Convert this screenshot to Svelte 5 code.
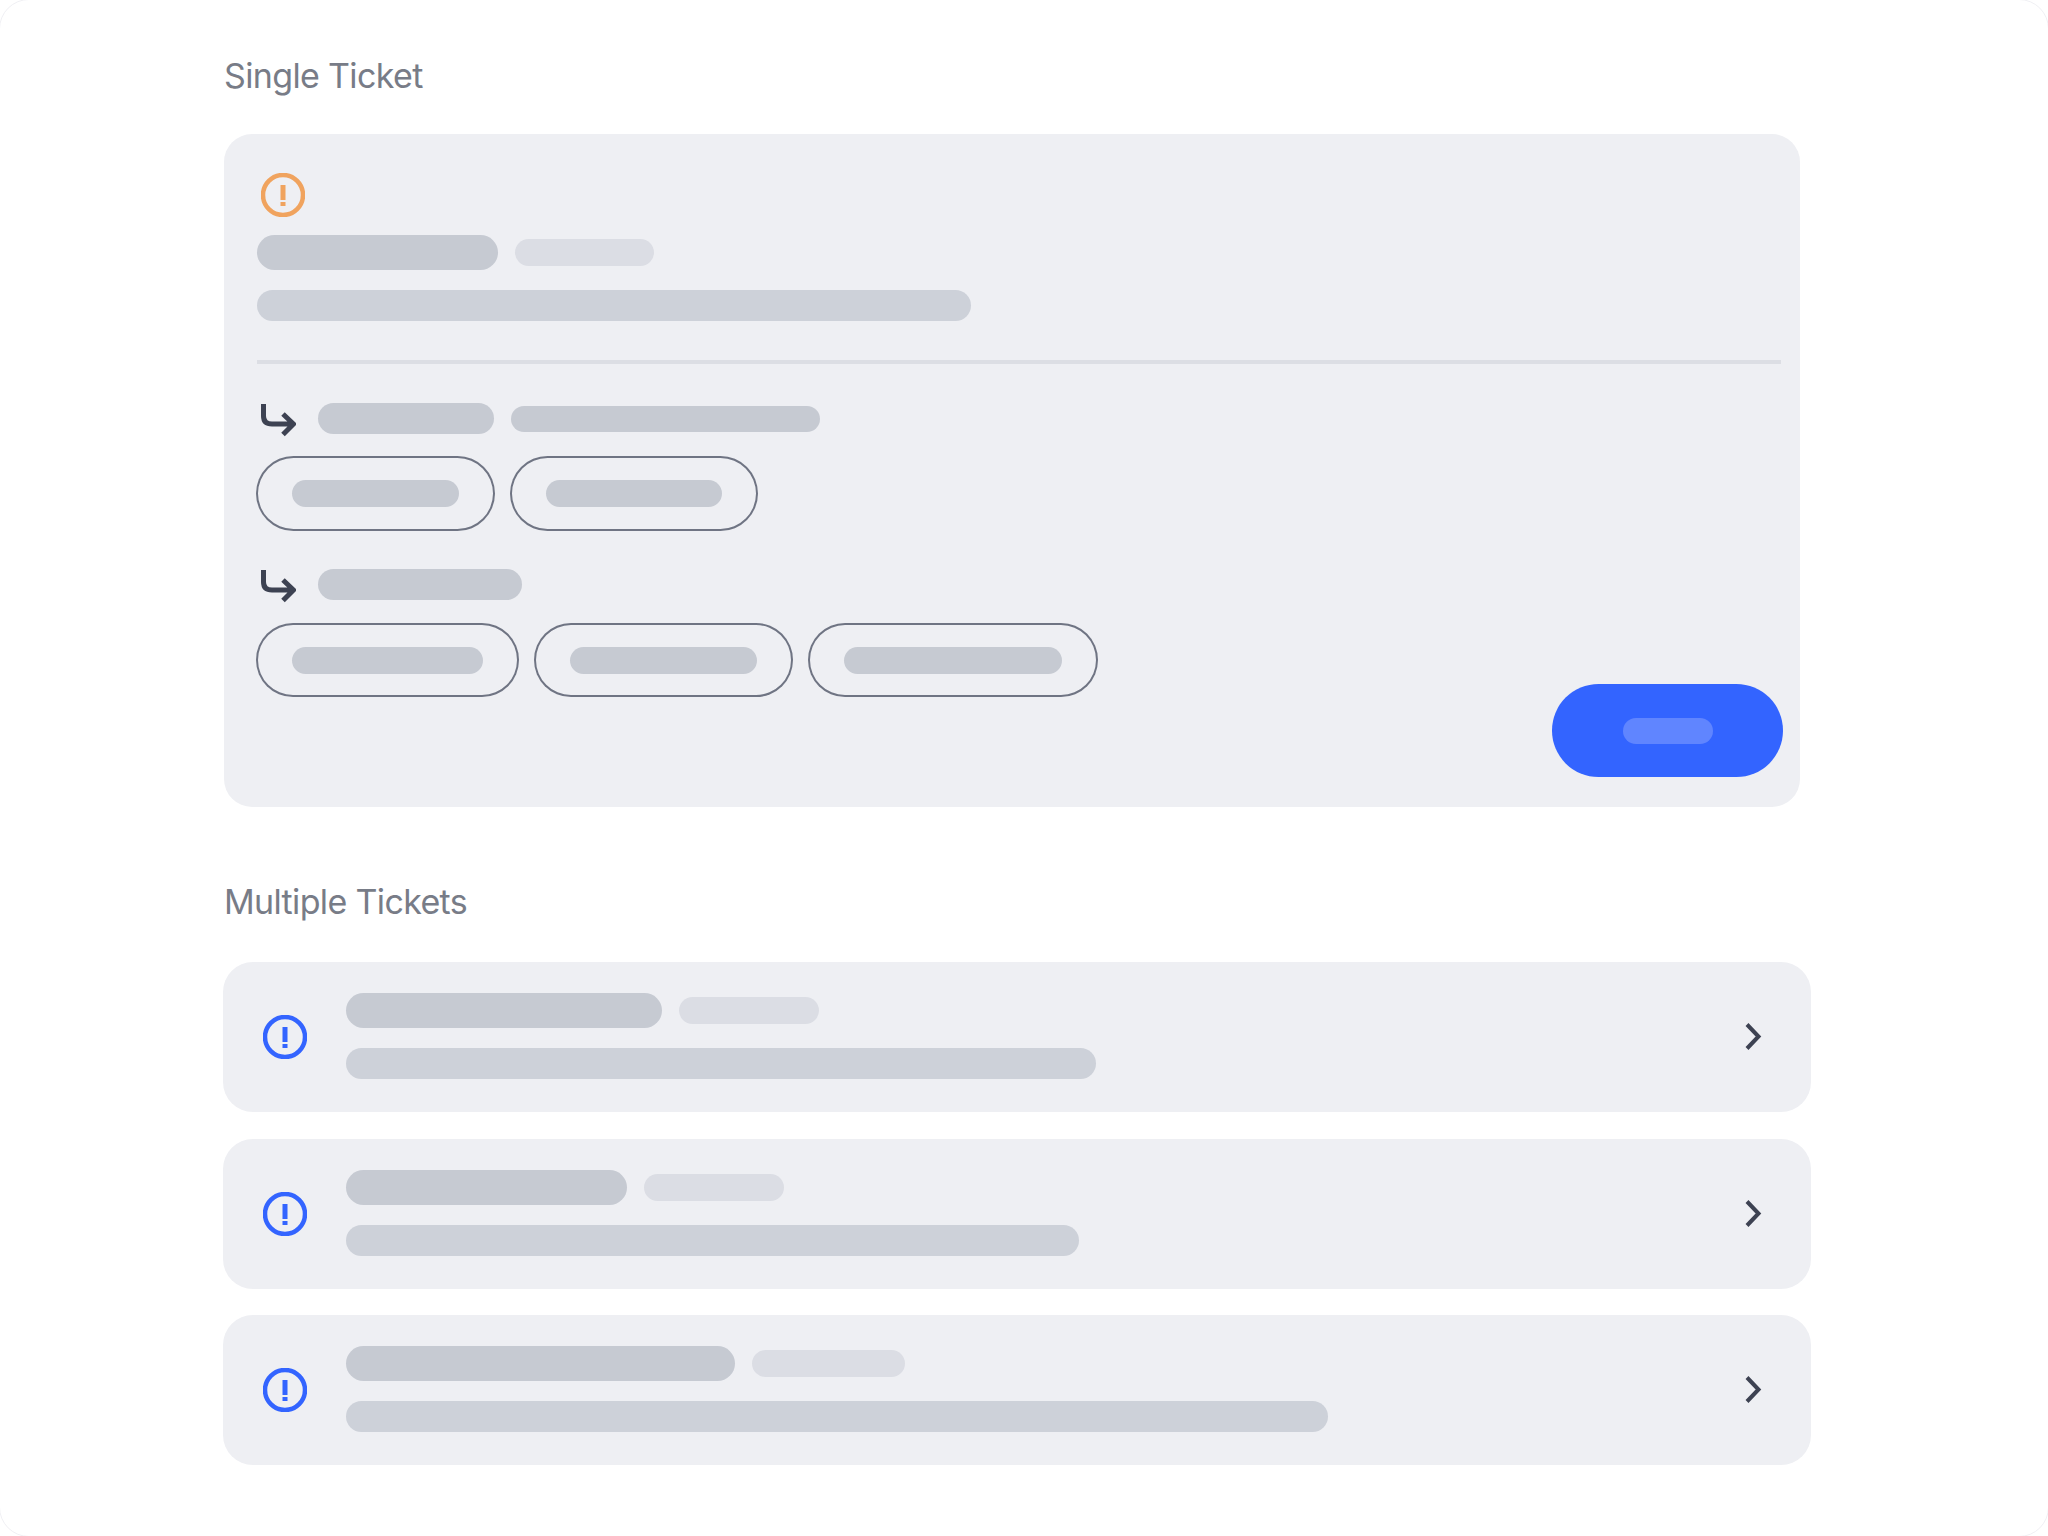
<script>
  const tickets = [
    { title: 316, tag: 140, line: 750 },
    { title: 281, tag: 140, line: 733 },
    { title: 389, tag: 153, line: 982 }
  ];
  const groups = [
    { bars: [{ w: 176, cls: 'h31' }, { w: 309, cls: 'h26' }], pills: [{ w: 239, bar: 167 }, { w: 248, bar: 176 }] },
    { bars: [{ w: 204, cls: 'h31' }], pills: [{ w: 263, bar: 191 }, { w: 259, bar: 187 }, { w: 290, bar: 218 }] }
  ];
</script>

{#snippet alert(cls)}
  <svg class="alert {cls}" viewBox="0 0 44 44" aria-hidden="true">
    <circle cx="22" cy="22" r="20" fill="none" stroke="currentColor" stroke-width="4.5" />
    <rect x="19.5" y="12" width="5" height="15" fill="currentColor" />
    <rect x="19.5" y="29" width="5" height="4" fill="currentColor" />
  </svg>
{/snippet}

<div class="page">
  <h2 class="heading">Single Ticket</h2>
  <section class="single">
    <div class="content">
      {@render alert('orange')}
      <div class="row title-row">
        <div class="bar title"></div>
        <div class="bar tag"></div>
      </div>
      <div class="bar line"></div>
      <div class="divider"></div>
      {#each groups as g, i}
        <div class="row arrow-row" class:second={i === 1}>
          <svg class="arrow" viewBox="0 0 35 35" aria-hidden="true">
            <path d="M2.5 2V14Q2.5 22 11 22H32M22 12L32.5 22L22 32.5" fill="none" stroke="currentColor" stroke-width="5" />
          </svg>
          {#each g.bars as b}
            <div class="bar {b.cls}" style="width:{b.w}px"></div>
          {/each}
        </div>
        <div class="pills" class:second={i === 1}>
          {#each g.pills as p}
            <div class="pill" style="width:{p.w}px">
              <div class="bar pill-bar" style="width:{p.bar}px"></div>
            </div>
          {/each}
        </div>
      {/each}
    </div>
    <button class="action" type="button"><span class="action-bar"></span></button>
  </section>

  <h2 class="heading multi">Multiple Tickets</h2>
  <section class="list">
    {#each tickets as t}
      <article class="ticket">
        {@render alert('blue')}
        <div class="text">
          <div class="row ticket-title">
            <div class="bar title" style="width:{t.title}px"></div>
            <div class="bar tag" style="width:{t.tag}px"></div>
          </div>
          <div class="bar line" style="width:{t.line}px"></div>
        </div>
        <svg class="chevron" viewBox="0 0 18 28" aria-hidden="true">
          <path d="M3 1.5L14.5 13.5L3 25.5" fill="none" stroke="currentColor" stroke-width="4" />
        </svg>
      </article>
    {/each}
  </section>
</div>

<style>
  :global(html), :global(body) {
    margin: 0;
    overflow: hidden;
    background: #fff;
  }
  .page {
    box-sizing: border-box;
    width: 2050px;
    height: 1538px;
    margin: -1px;
    padding: 56px 0 0 224px;
    border: 1px solid #f0f0f4;
    border-radius: 30px;
    background: #fff;
    font-family: Inter, "Liberation Sans", sans-serif;
  }
  .heading {
    margin: 0;
    font-size: 34px;
    line-height: 40px;
    font-weight: 400;
    letter-spacing: -0.65px;
    color: #787c87;
  }
  .heading.multi {
    margin-top: 75px;
  }
  .single {
    box-sizing: border-box;
    display: grid;
    width: 1576px;
    height: 673px;
    margin-top: 38px;
    padding: 39px 17px 30px 33px;
    border-radius: 28px;
    background: #eeeff3;
  }
  .content, .action {
    grid-area: 1 / 1;
  }
  .content {
    min-width: 0;
  }
  .alert {
    display: block;
    width: 44px;
    height: 44px;
    flex: none;
  }
  .orange {
    margin-left: 4px;
    color: #f0a35e;
  }
  .blue {
    color: #3364ff;
  }
  .row {
    display: flex;
    align-items: center;
  }
  .bar {
    flex: none;
    border-radius: 999px;
    background: #c6cad2;
  }
  .title {
    width: 241px;
    height: 35px;
  }
  .tag {
    width: 139px;
    height: 27px;
    background: #dbdde4;
  }
  .line {
    width: 714px;
    height: 31px;
    background: #cdd1d9;
  }
  .title-row {
    gap: 17px;
    margin-top: 18px;
  }
  .content > .line {
    margin-top: 20px;
  }
  .divider {
    width: 1524px;
    height: 4px;
    margin-top: 39px;
    background: #dcdee4;
  }
  .arrow-row {
    gap: 17px;
    margin-top: 38px;
    padding-left: 4px;
  }
  .arrow-row.second {
    margin-top: 37px;
  }
  .arrow {
    flex: none;
    width: 35px;
    height: 35px;
    margin-right: 5px;
    color: #3d4252;
  }
  .h31 {
    height: 31px;
    margin-bottom: 2px;
    background: #c6cad2;
  }
  .h26 {
    height: 26px;
    margin-bottom: 1px;
  }
  .pills {
    display: flex;
    gap: 15px;
    margin: 19px 0 0 -1px;
  }
  .pills.second {
    margin-top: 20px;
  }
  .pill {
    box-sizing: border-box;
    display: flex;
    align-items: center;
    height: 75px;
    padding-left: 36px;
    border-radius: 999px;
    box-shadow: inset 0 0 0 2px #6f7483;
  }
  .pills.second .pill {
    height: 74px;
  }
  .pill-bar {
    height: 27px;
  }
  .action {
    justify-self: end;
    align-self: end;
    display: flex;
    align-items: center;
    justify-content: center;
    width: 231px;
    height: 93px;
    padding: 0;
    border: 0;
    border-radius: 999px;
    background: #3364ff;
  }
  .action-bar {
    display: block;
    width: 90px;
    height: 26px;
    border-radius: 999px;
    background: #6085ff;
  }
  .list {
    display: flex;
    flex-direction: column;
    gap: 26.5px;
    width: 1588px;
    margin-top: 40px;
    margin-left: -1px;
  }
  .ticket {
    box-sizing: border-box;
    display: flex;
    align-items: center;
    height: 150px;
    padding: 0 49px 0 40px;
    border-radius: 30px;
    background: #eeeff3;
  }
  .text {
    flex: 1;
    margin-left: 39px;
    padding-bottom: 2px;
  }
  .ticket-title {
    gap: 17px;
  }
  .text .line {
    margin-top: 20px;
  }
  .chevron {
    flex: none;
    width: 18px;
    height: 28px;
    color: #3d4252;
  }
</style>
